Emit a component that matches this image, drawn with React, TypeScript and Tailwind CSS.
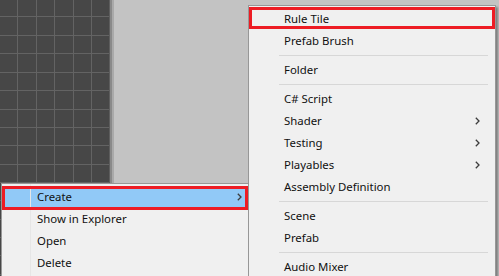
import type { ReactNode } from "react";

type Entry = { label: string; sub?: boolean } | "sep";

const assetMenu: Entry[] = [
  { label: "Create", sub: true },
  { label: "Show in Explorer" },
  { label: "Open" },
  { label: "Delete" },
];

const createMenu: Entry[] = [
  { label: "Rule Tile" },
  { label: "Prefab Brush" },
  "sep",
  { label: "Folder" },
  "sep",
  { label: "C# Script" },
  { label: "Shader", sub: true },
  { label: "Testing", sub: true },
  { label: "Playables", sub: true },
  { label: "Assembly Definition" },
  "sep",
  { label: "Scene" },
  { label: "Prefab" },
  "sep",
  { label: "Audio Mixer" },
];

function Chevron() {
  return (
    <svg width="5" height="8" viewBox="0 0 5 8" className="shrink-0">
      <path d="M0.8 0.8 L4 4 L0.8 7.2" fill="none" stroke="#3c3c3c" strokeWidth="1.3" />
    </svg>
  );
}

function MenuRow({ label, sub, active }: { label: string; sub?: boolean; active?: boolean }) {
  return (
    <div
      className={`h-[22px] flex items-center pl-[35px] pr-[15px] ${active ? "bg-[#91c9f7]" : ""}`}
    >
      <span className="flex-1 whitespace-nowrap">{label}</span>
      {sub && <Chevron />}
    </div>
  );
}

function Menu({ entries, active, gutter, className }: {
  entries: Entry[];
  active?: string;
  gutter?: boolean;
  className: string;
}) {
  return (
    <div
      className={`absolute bg-[#f0f0f0] border border-[#979797] pt-[2px] shadow-[2px_2px_2px_rgba(0,0,0,0.35)] text-[11.4px] text-[#111] ${className}`}
    >
      {gutter && <div className="absolute left-[28px] top-0 bottom-0 w-px bg-[#e6e6e6]" />}
      {entries.map((e, i) =>
        e === "sep" ? (
          <div key={i} className="pl-[30px] pr-[7px] pt-[3px] pb-[3px]">
            <div className="h-px bg-[#d7d7d7]" />
          </div>
        ) : (
          <MenuRow key={i} label={e.label} sub={e.sub} active={e.label === active} />
        )
      )}
    </div>
  );
}

function Marker({ className }: { className: string }): ReactNode {
  return <div className={`absolute border-[3px] border-[#ed1c24] ${className}`} />;
}

export default function App() {
  return (
    <div
      className="relative w-[499px] h-[276px] overflow-hidden bg-[#c3c3c3] flex"
      style={{ fontFamily: '"Segoe UI", "Noto Sans", sans-serif' }}
    >
      <div className="w-[109px] h-full bg-[#474747]">
        <svg width="109" height="276" className="block">
          {[17, 36, 54, 73, 91].map((x) => (
            <line key={x} x1={x + 0.5} y1="0" x2={x + 0.5} y2="276" stroke="#636363" strokeWidth="1" />
          ))}
          {[16, 35, 53, 72, 90, 109, 127, 145, 164, 182, 200, 219, 237, 255, 274].map((y) => (
            <line key={y} x1="0" y1={y + 0.5} x2="109" y2={y + 0.5} stroke="#636363" strokeWidth="1" />
          ))}
        </svg>
      </div>
      <div className="w-px h-full bg-[#5d5d5d]" />
      <div className="w-[2px] h-full bg-[#8a8a8a]" />
      <div className="w-[2px] h-full bg-[#a9a9a9]" />
      <div className="flex-1 h-full" />

      <Menu entries={assetMenu} active="Create" gutter className="left-[1px] top-[183px] w-[257px] h-[100px]" />
      <Marker className="left-[2px] top-[186px] w-[246px] h-[24px]" />

      <Menu entries={createMenu} className="left-[248px] top-[5px] w-[248px] h-[290px]" />
      <Marker className="left-[249px] top-[7px] w-[246px] h-[22px]" />
    </div>
  );
}
